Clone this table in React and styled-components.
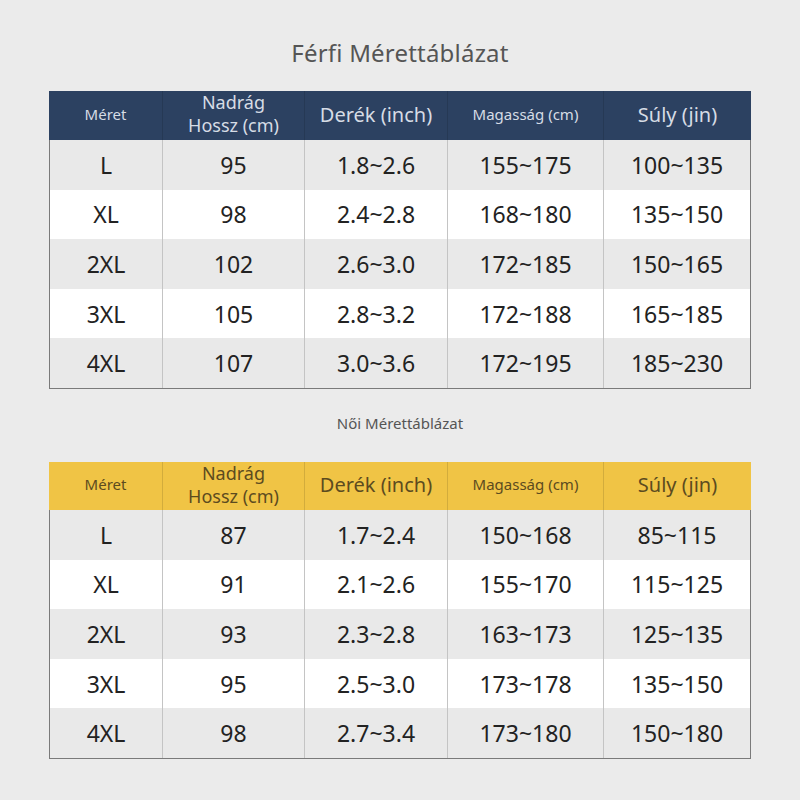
import React from 'react';
import styled, { createGlobalStyle } from 'styled-components';

const GlobalStyle = createGlobalStyle`
  html, body {
    margin: 0;
    padding: 0;
    background: #ebebeb;
  }
  body {
    font-family: 'Noto Sans', 'Open Sans', sans-serif;
  }
`;

const themes = {
  navy: { bg: '#2c4161', fg: '#d6dce5' },
  yellow: { bg: '#f0c445', fg: '#5c4b1f' },
};

const columns = '114px 142px 143px 156px 147px';

const Page = styled.main`
  width: 800px;
  height: 800px;
  display: flex;
  flex-direction: column;
  align-items: center;
  overflow: hidden;
`;

const Title = styled.h1`
  margin: 37px 0 22px;
  font-size: 24px;
  line-height: 32px;
  font-weight: 400;
  color: #555;
  letter-spacing: 0.2px;
`;

const SubTitle = styled.h2`
  margin: 24px 0 29px;
  font-size: 15px;
  line-height: 20px;
  font-weight: 400;
  color: #555;
`;

const Table = styled.div`
  width: 702px;
  box-sizing: border-box;
  border: 1px solid #7a7a7a;
  border-top: none;
`;

const Row = styled.div`
  display: grid;
  grid-template-columns: ${columns};
  margin: 0 -1px;
  height: ${(p) => p.$h}px;
  background: ${(p) => p.$bg};
`;

const HeadCell = styled.div`
  display: flex;
  align-items: center;
  justify-content: center;
  text-align: center;
  padding-bottom: 3px;
  color: ${(p) => p.$fg};
  font-size: ${(p) => p.$size}px;
  line-height: 23px;
  border-right: 1px solid rgba(0, 0, 0, 0.12);
  &:last-child {
    border-right: none;
  }
`;

const Cell = styled.div`
  display: flex;
  align-items: center;
  justify-content: center;
  font-size: 23px;
  color: #222;
  border-left: ${(p) => (p.$first ? '1px solid #7a7a7a' : 'none')};
  border-right: 1px solid #c4c4c4;
  &:last-child {
    border-right: 1px solid #7a7a7a;
  }
`;

const headers = [
  { label: 'Méret', size: 15 },
  { label: ['Nadrág', 'Hossz (cm)'], size: 18 },
  { label: 'Derék (inch)', size: 20 },
  { label: 'Magasság (cm)', size: 15 },
  { label: 'Súly (jin)', size: 20 },
];

const men = [
  ['L', '95', '1.8~2.6', '155~175', '100~135'],
  ['XL', '98', '2.4~2.8', '168~180', '135~150'],
  ['2XL', '102', '2.6~3.0', '172~185', '150~165'],
  ['3XL', '105', '2.8~3.2', '172~188', '165~185'],
  ['4XL', '107', '3.0~3.6', '172~195', '185~230'],
];

const women = [
  ['L', '87', '1.7~2.4', '150~168', '85~115'],
  ['XL', '91', '2.1~2.6', '155~170', '115~125'],
  ['2XL', '93', '2.3~2.8', '163~173', '125~135'],
  ['3XL', '95', '2.5~3.0', '173~178', '135~150'],
  ['4XL', '98', '2.7~3.4', '173~180', '150~180'],
];

function SizeTable({ theme, headH, rows }) {
  const t = themes[theme];
  return (
    <Table>
      <Row $h={headH} $bg={t.bg}>
        {headers.map((h, i) => (
          <HeadCell key={i} $fg={t.fg} $size={h.size}>
            {Array.isArray(h.label) ? (
              <span>
                {h.label[0]}
                <br />
                {h.label[1]}
              </span>
            ) : (
              h.label
            )}
          </HeadCell>
        ))}
      </Row>
      {rows.map((r, i) => (
        <Row key={i} $h={49.6} $bg={i % 2 === 0 ? '#e9e9e9' : '#ffffff'}>
          {r.map((v, j) => (
            <Cell key={j} $first={j === 0}>
              {v}
            </Cell>
          ))}
        </Row>
      ))}
    </Table>
  );
}

export default function App() {
  return (
    <Page>
      <GlobalStyle />
      <Title>Férfi Mérettáblázat</Title>
      <SizeTable theme="navy" headH={49} rows={men} />
      <SubTitle>Női Mérettáblázat</SubTitle>
      <SizeTable theme="yellow" headH={48} rows={women} />
    </Page>
  );
}
